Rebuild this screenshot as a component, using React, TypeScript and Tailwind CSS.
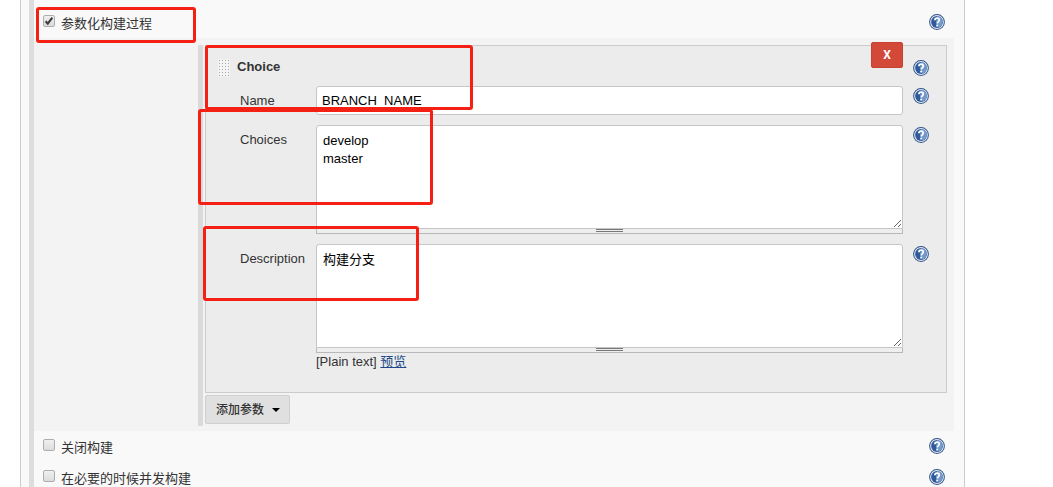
import { useId } from "react";
import type { ReactNode } from "react";

function HelpButton({ label }: { label: string }) {
  return (
    <button type="button" aria-label={label} className="block size-4 shrink-0 cursor-pointer">
      <svg viewBox="0 0 16 16" className="size-4">
        <circle cx="8" cy="8" r="7.9" fill="#2f5285" />
        <circle cx="8" cy="8" r="6.9" fill="#e3ebf5" />
        <circle cx="8" cy="8" r="5.9" fill="#2f5a9b" />
        <path d="M8 2.1a5.9 5.9 0 0 1 5.9 5.9c0 2.6-1.7 4.9-4.2 5.6L7 8z" fill="#7199cc" />
        <path
          d="M5.9 6.2C5.9 4.8 6.8 4.1 8.1 4.1s2.2.8 2.2 2c0 1.7-2.1 1.8-2.1 3.5"
          fill="none"
          stroke="#fff"
          strokeWidth="1.8"
        />
        <rect x="7.2" y="10.6" width="1.9" height="1.9" fill="#fff" />
      </svg>
    </button>
  );
}

function OptionRow({ label, checked = false }: { label: string; checked?: boolean }) {
  const id = useId();
  return (
    <div className="flex h-[31px] items-start px-[9px]">
      <span className="mt-2 grid size-3 shrink-0">
        <input
          id={id}
          type="checkbox"
          defaultChecked={checked}
          className="peer col-start-1 row-start-1 size-3 appearance-none rounded-xs border border-[#adadad] bg-linear-to-b from-[#f0f0f0] to-[#dcdcdc]"
        />
        <svg
          viewBox="0 0 12 12"
          className="pointer-events-none invisible col-start-1 row-start-1 size-3 peer-checked:visible"
        >
          <path d="M2.6 6.2l2.2 2.5 4.5-6" fill="none" stroke="#3c3c3c" strokeWidth="2.1" />
        </svg>
      </span>
      <label htmlFor={id} className="mt-2 ml-1.5 flex-1 leading-[18px]">
        {label}
      </label>
      <span className="mt-[7px]">
        <HelpButton label={`帮助: ${label}`} />
      </span>
    </div>
  );
}

function Field({
  label,
  id,
  children,
}: {
  label: string;
  id: string;
  children: ReactNode;
}) {
  return (
    <div className="grid grid-cols-[110px_minmax(0,1fr)_43px]">
      <label htmlFor={id} className="pt-1.5 pl-[34px] leading-[18px]">
        {label}
      </label>
      <div>{children}</div>
      <div className="pt-0.5 pl-2.5">
        <HelpButton label={`帮助: ${label}`} />
      </div>
    </div>
  );
}

function TextArea({ id, value }: { id: string; value: string }) {
  return (
    <>
      <textarea
        id={id}
        defaultValue={value}
        className="block h-[104px] w-full resize rounded-t-[3px] border border-[#c6c6c6] bg-white px-1.5 py-1.5 leading-[18px] text-black outline-none"
      />
      <div className="flex h-[5px] items-start justify-center border-x border-b border-[#b8b8b8] bg-[#eeeeee]">
        <div className="h-[3px] w-[27px] border-y border-[#777]" />
      </div>
    </>
  );
}

function DragHandle() {
  return (
    <svg viewBox="0 0 12 18" className="mt-1 ml-3 h-[18px] w-3 shrink-0 cursor-move">
      <defs>
        <pattern id="grip" width="3" height="3" patternUnits="userSpaceOnUse">
          <rect width="3" height="3" fill="#f4f4f4" />
          <rect x="1" y="1" width="1" height="1" fill="#aaa" />
        </pattern>
      </defs>
      <rect width="12" height="18" fill="url(#grip)" />
    </svg>
  );
}

function ChoiceParameter() {
  return (
    <section className="relative border border-[#cccccc] bg-[#ececec] pb-[21px]">
      <button
        type="button"
        aria-label="删除"
        className="absolute -top-1 right-[43px] h-[26px] w-8 rounded-xs border border-[#c9402f] bg-[#d24939] font-['Roboto',sans-serif] text-xs font-bold text-white"
      >
        X
      </button>
      <header className="flex h-10 items-center">
        <DragHandle />
        <h2 className="mt-0.5 ml-[7px] flex-1 font-bold">Choice</h2>
        <span className="mt-1 mr-[17px]">
          <HelpButton label="帮助: Choice" />
        </span>
      </header>
      <div className="flex flex-col gap-2.5">
        <Field label="Name" id="param-name">
          <input
            id="param-name"
            type="text"
            defaultValue="BRANCH_NAME"
            className="block h-[29px] w-full rounded-[3px] border border-[#c6c6c6] bg-white px-[5px] text-black outline-none"
          />
        </Field>
        <Field label="Choices" id="param-choices">
          <TextArea id="param-choices" value={"develop\nmaster"} />
        </Field>
        <Field label="Description" id="param-description">
          <TextArea id="param-description" value="构建分支" />
          <p className="leading-[18px]">
            [Plain text]{" "}
            <a href="#preview" className="text-[#204a87] underline">
              预览
            </a>
          </p>
        </Field>
      </div>
    </section>
  );
}

export default function App() {
  return (
    <div className="relative h-screen overflow-hidden bg-white font-['Liberation_Sans','Noto_Sans_CJK_SC',sans-serif] text-[13px] text-[#333333]">
      <main className="mr-[88px] ml-5 min-h-screen border-x border-[#cccccc] bg-[#f9f9f9] pr-2.5 pl-2">
        <div className="min-h-screen border-l-5 border-[#dddddd] pt-[7px]">
          <OptionRow label="参数化构建过程" checked />
          <div className="bg-[#f3f3f3] pt-[7px] pr-[7px] pb-[5px] pl-[164px]">
            <div className="border-l-5 border-[#dadada] pb-0.5 pl-0.5">
              <ChoiceParameter />
              <button
                type="button"
                className="mt-0.5 flex h-[29px] items-center gap-2 rounded-xs border border-[#cfcfcf] bg-[#e0e0e0] pr-[9px] pl-2.5 text-xs font-medium text-[#333333]"
              >
                添加参数
                <svg viewBox="0 0 8 4" className="h-1 w-2">
                  <path d="M0 0h8L4 4z" fill="#000" />
                </svg>
              </button>
            </div>
          </div>
          <OptionRow label="关闭构建" />
          <OptionRow label="在必要的时候并发构建" />
        </div>
      </main>

      <div className="pointer-events-none absolute top-[7px] left-9 h-9 w-40 rounded-[3px] border-3 border-[#f32013]" />
      <div className="pointer-events-none absolute top-[45px] left-[205px] h-[65px] w-[268px] rounded-[3px] border-3 border-[#f32013]" />
      <div className="pointer-events-none absolute top-[109px] left-[198px] h-24 w-[235px] rounded-[3px] border-3 border-[#f32013]" />
      <div className="pointer-events-none absolute top-[226px] left-[203px] h-[75px] w-[216px] rounded-[3px] border-3 border-[#f32013]" />
    </div>
  );
}
